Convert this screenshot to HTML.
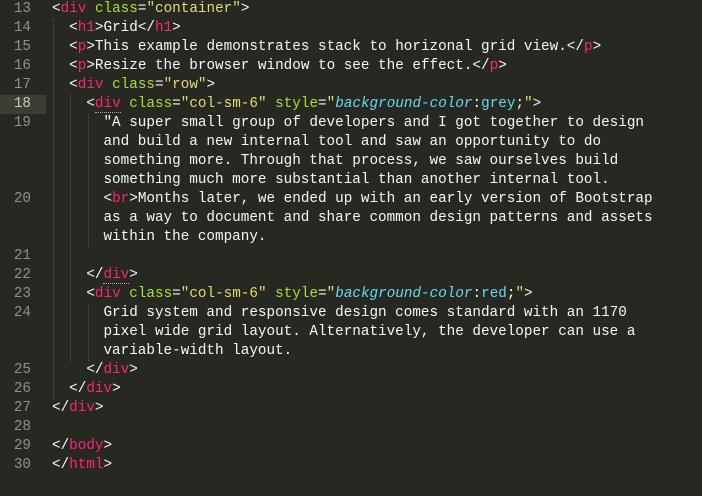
<!DOCTYPE html>
<html><head><meta charset="utf-8"><style>
html,body{margin:0;padding:0;background:#272822;width:702px;height:496px;overflow:hidden}
#ed{position:absolute;left:0;top:0px;font-family:"Liberation Mono",monospace;font-size:14.3px;color:#f8f8f2}
.r{height:19px;line-height:19px;position:relative;white-space:pre}
.n{position:absolute;left:0;width:31px;text-align:right;color:#8f908a}
.c{position:absolute;left:52px}
.hl .n{color:#c8c8c0}
.hl::before{content:"";position:absolute;left:0;top:0;width:46px;height:19px;background:#3e3d32}
.t{color:#f92672}.a{color:#a6e22e}.s{color:#e6db74}.i{color:#66d9ef;font-style:italic}.v{color:#66d9ef}
.u{border-bottom:1px dotted #aaa}
.g{position:absolute;width:0;border-left:1px dotted #555}
</style></head><body>
<div class="g" style="left:53px;top:19px;height:380px"></div>
<div class="g" style="left:70px;top:95px;height:266px"></div>
<div class="g" style="left:88px;top:114px;height:133px"></div>
<div class="g" style="left:88px;top:304px;height:57px"></div>
<div id="ed">
<div class="r"><span class="n">13</span><span class="c">&lt;<span class="t">div</span> <span class="a">class</span>=<span class="s">"container"</span>&gt;</span></div>
<div class="r"><span class="n">14</span><span class="c">  &lt;<span class="t">h1</span>&gt;Grid&lt;/<span class="t">h1</span>&gt;</span></div>
<div class="r"><span class="n">15</span><span class="c">  &lt;<span class="t">p</span>&gt;This example demonstrates stack to horizonal grid view.&lt;/<span class="t">p</span>&gt;</span></div>
<div class="r"><span class="n">16</span><span class="c">  &lt;<span class="t">p</span>&gt;Resize the browser window to see the effect.&lt;/<span class="t">p</span>&gt;</span></div>
<div class="r"><span class="n">17</span><span class="c">  &lt;<span class="t">div</span> <span class="a">class</span>=<span class="s">"row"</span>&gt;</span></div>
<div class="r hl"><span class="n">18</span><span class="c">    &lt;<span class="t u">div</span> <span class="a">class</span>=<span class="s">"col-sm-6"</span> <span class="a">style</span>=<span class="s">"</span><span class="i">background-color</span>:<span class="v">grey</span>;<span class="s">"</span>&gt;</span></div>
<div class="r"><span class="n">19</span><span class="c">      "A super small group of developers and I got together to design</span></div>
<div class="r"><span class="c">      and build a new internal tool and saw an opportunity to do</span></div>
<div class="r"><span class="c">      something more. Through that process, we saw ourselves build</span></div>
<div class="r"><span class="c">      something much more substantial than another internal tool.</span></div>
<div class="r"><span class="n">20</span><span class="c">      &lt;<span class="t">br</span>&gt;Months later, we ended up with an early version of Bootstrap</span></div>
<div class="r"><span class="c">      as a way to document and share common design patterns and assets</span></div>
<div class="r"><span class="c">      within the company.</span></div>
<div class="r"><span class="n">21</span></div>
<div class="r"><span class="n">22</span><span class="c">    &lt;/<span class="t u">div</span>&gt;</span></div>
<div class="r"><span class="n">23</span><span class="c">    &lt;<span class="t">div</span> <span class="a">class</span>=<span class="s">"col-sm-6"</span> <span class="a">style</span>=<span class="s">"</span><span class="i">background-color</span>:<span class="v">red</span>;<span class="s">"</span>&gt;</span></div>
<div class="r"><span class="n">24</span><span class="c">      Grid system and responsive design comes standard with an 1170</span></div>
<div class="r"><span class="c">      pixel wide grid layout. Alternatively, the developer can use a</span></div>
<div class="r"><span class="c">      variable-width layout.</span></div>
<div class="r"><span class="n">25</span><span class="c">    &lt;/<span class="t">div</span>&gt;</span></div>
<div class="r"><span class="n">26</span><span class="c">  &lt;/<span class="t">div</span>&gt;</span></div>
<div class="r"><span class="n">27</span><span class="c">&lt;/<span class="t">div</span>&gt;</span></div>
<div class="r"><span class="n">28</span></div>
<div class="r"><span class="n">29</span><span class="c">&lt;/<span class="t">body</span>&gt;</span></div>
<div class="r"><span class="n">30</span><span class="c">&lt;/<span class="t">html</span>&gt;</span></div>
</div>
</body></html>
